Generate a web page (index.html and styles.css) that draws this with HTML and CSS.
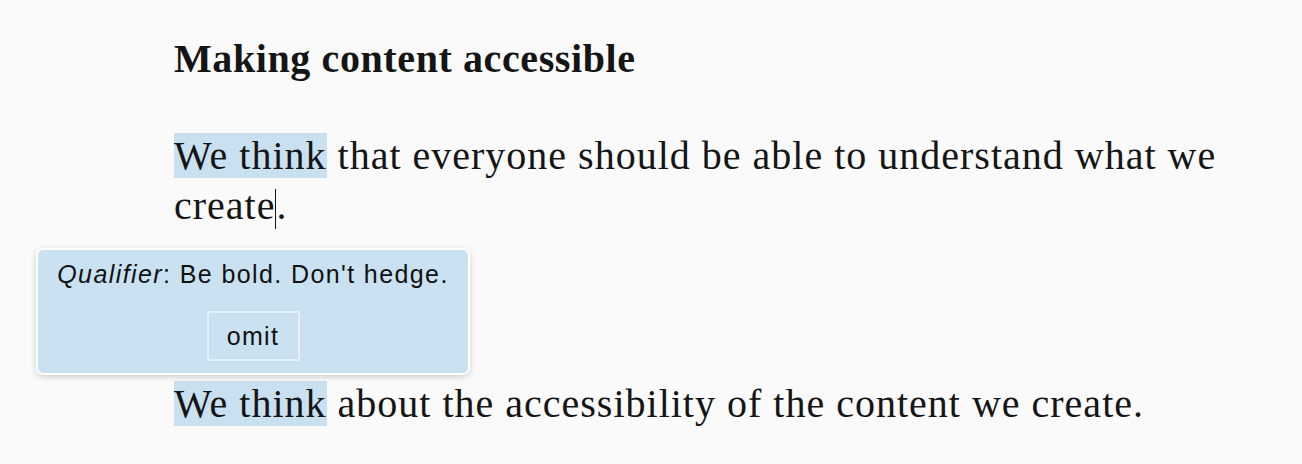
FILE: index.html
```html
<!DOCTYPE html>
<html>
<head>
<meta charset="utf-8">
<link rel="stylesheet" href="styles.css">
</head>
<body>
<main class="doc">
  <h2 class="title">Making content accessible</h2>
  <p class="para"><span class="hl">We think</span> that everyone should be able to understand what we create<span class="caret"></span>.</p>
  <p class="para para-last"><span class="hl">We think</span> about the accessibility of the content we create.</p>
  <div class="tip">
    <div class="tip-text"><em>Qualifier</em>: Be bold. Don't hedge.</div>
    <button class="tip-btn">omit</button>
  </div>
</main>
</body>
</html>
```

FILE: styles.css
```css
html, body {
  margin: 0;
  padding: 0;
  background: #fafafa;
}
body {
  width: 1302px;
  height: 464px;
  overflow: hidden;
}
.doc {
  position: relative;
  padding: 37px 0 0 174px;
  font-family: "Liberation Serif", serif;
  color: #151515;
}
.title {
  margin: 0;
  font-size: 40px;
  line-height: 44px;
  font-weight: bold;
  letter-spacing: 0.6px;
}
.para {
  margin: 50px 0 0 0;
  font-size: 40px;
  line-height: 50px;
  letter-spacing: 1px;
  width: 1090px;
}
.para-last {
  margin-top: 148px;
}
.hl {
  background: #c9e0f1;
}
.caret {
  display: inline-block;
  width: 1px;
  height: 40px;
  background: #151515;
  vertical-align: -10px;
}
.tip {
  position: absolute;
  left: 36px;
  top: 248px;
  width: 434px;
  height: 127px;
  box-sizing: border-box;
  background: #cae1f1;
  border: 2px solid #fff;
  border-radius: 7px;
  box-shadow: 0 2px 6px rgba(0,0,0,0.18);
  display: flex;
  flex-direction: column;
  align-items: center;
  font-family: "Liberation Sans", Arial, sans-serif;
  color: #111;
}
.tip-text {
  margin-top: 9px;
  font-size: 25px;
  line-height: 30px;
  letter-spacing: 1.4px;
}
.tip-btn {
  margin-top: 22px;
  width: 93px;
  height: 50px;
  background: transparent;
  border: 2px solid #e5f0f8;
  font-family: "Liberation Sans", Arial, sans-serif;
  font-size: 25px;
  letter-spacing: 1.3px;
  color: #111;
  padding: 0;
}
```
